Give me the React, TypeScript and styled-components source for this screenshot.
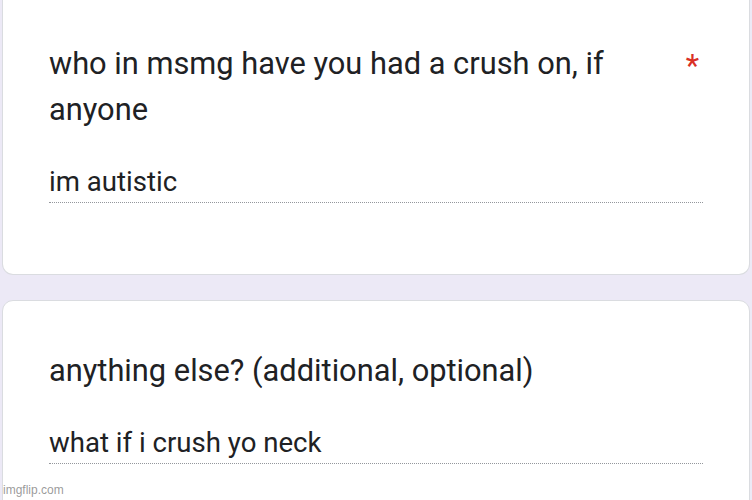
import React from "react";
import styled, { createGlobalStyle } from "styled-components";

const Global = createGlobalStyle`
  html, body {
    margin: 0;
    padding: 0;
    background: #ece9f6;
    overflow: hidden;
    font-family: Roboto, "Noto Sans", Arial, sans-serif;
  }
`;

const Page = styled.div`
  position: relative;
  width: 752px;
  height: 500px;
  overflow: hidden;
  padding: 0 2px;
  box-sizing: border-box;
  display: flex;
  flex-direction: column;
  gap: 25px;
`;

const Card = styled.section<{ $top?: number; $bottom?: number; $cutTop?: boolean }>`
  background: #ffffff;
  border: 1px solid #dadce0;
  border-radius: ${(p) => (p.$cutTop ? "0 0 11px 11px" : "11px")};
  border-top: ${(p) => (p.$cutTop ? "none" : "1px solid #dadce0")};
  padding: ${(p) => p.$top ?? 45}px 46px ${(p) => p.$bottom ?? 71}px 46px;
  flex-shrink: 0;
`;

const TitleRow = styled.div`
  display: flex;
  align-items: flex-start;
  gap: 24px;
`;

const Title = styled.div`
  flex: 1;
  font-size: 30.8px;
  line-height: 46px;
  color: #202124;
`;

const Required = styled.span`
  color: #d93025;
  font-size: 31px;
  line-height: 46px;
  margin-right: 4px;
  padding-top: 2px;
`;

const Answer = styled.div`
  margin-top: 31px;
  font-size: 27.6px;
  line-height: 36px;
  color: #202124;
  padding-bottom: 2px;
  border-bottom: 1px dotted #94979c;
`;

const Watermark = styled.div`
  position: absolute;
  left: 3px;
  bottom: 3px;
  font-family: "Liberation Sans", Arial, sans-serif;
  font-size: 12px;
  color: rgba(120, 120, 120, 0.75);
`;

export default function App() {
  return (
    <>
      <Global />
      <Page>
        <Card $cutTop $top={41} $bottom={71}>
          <TitleRow>
            <Title>who in msmg have you had a crush on, if anyone</Title>
            <Required>*</Required>
          </TitleRow>
          <Answer>im autistic</Answer>
        </Card>
        <Card $top={47} $bottom={80}>
          <TitleRow>
            <Title>anything else? (additional, optional)</Title>
          </TitleRow>
          <Answer>what if i crush yo neck</Answer>
        </Card>
        <Watermark>imgflip.com</Watermark>
      </Page>
    </>
  );
}
